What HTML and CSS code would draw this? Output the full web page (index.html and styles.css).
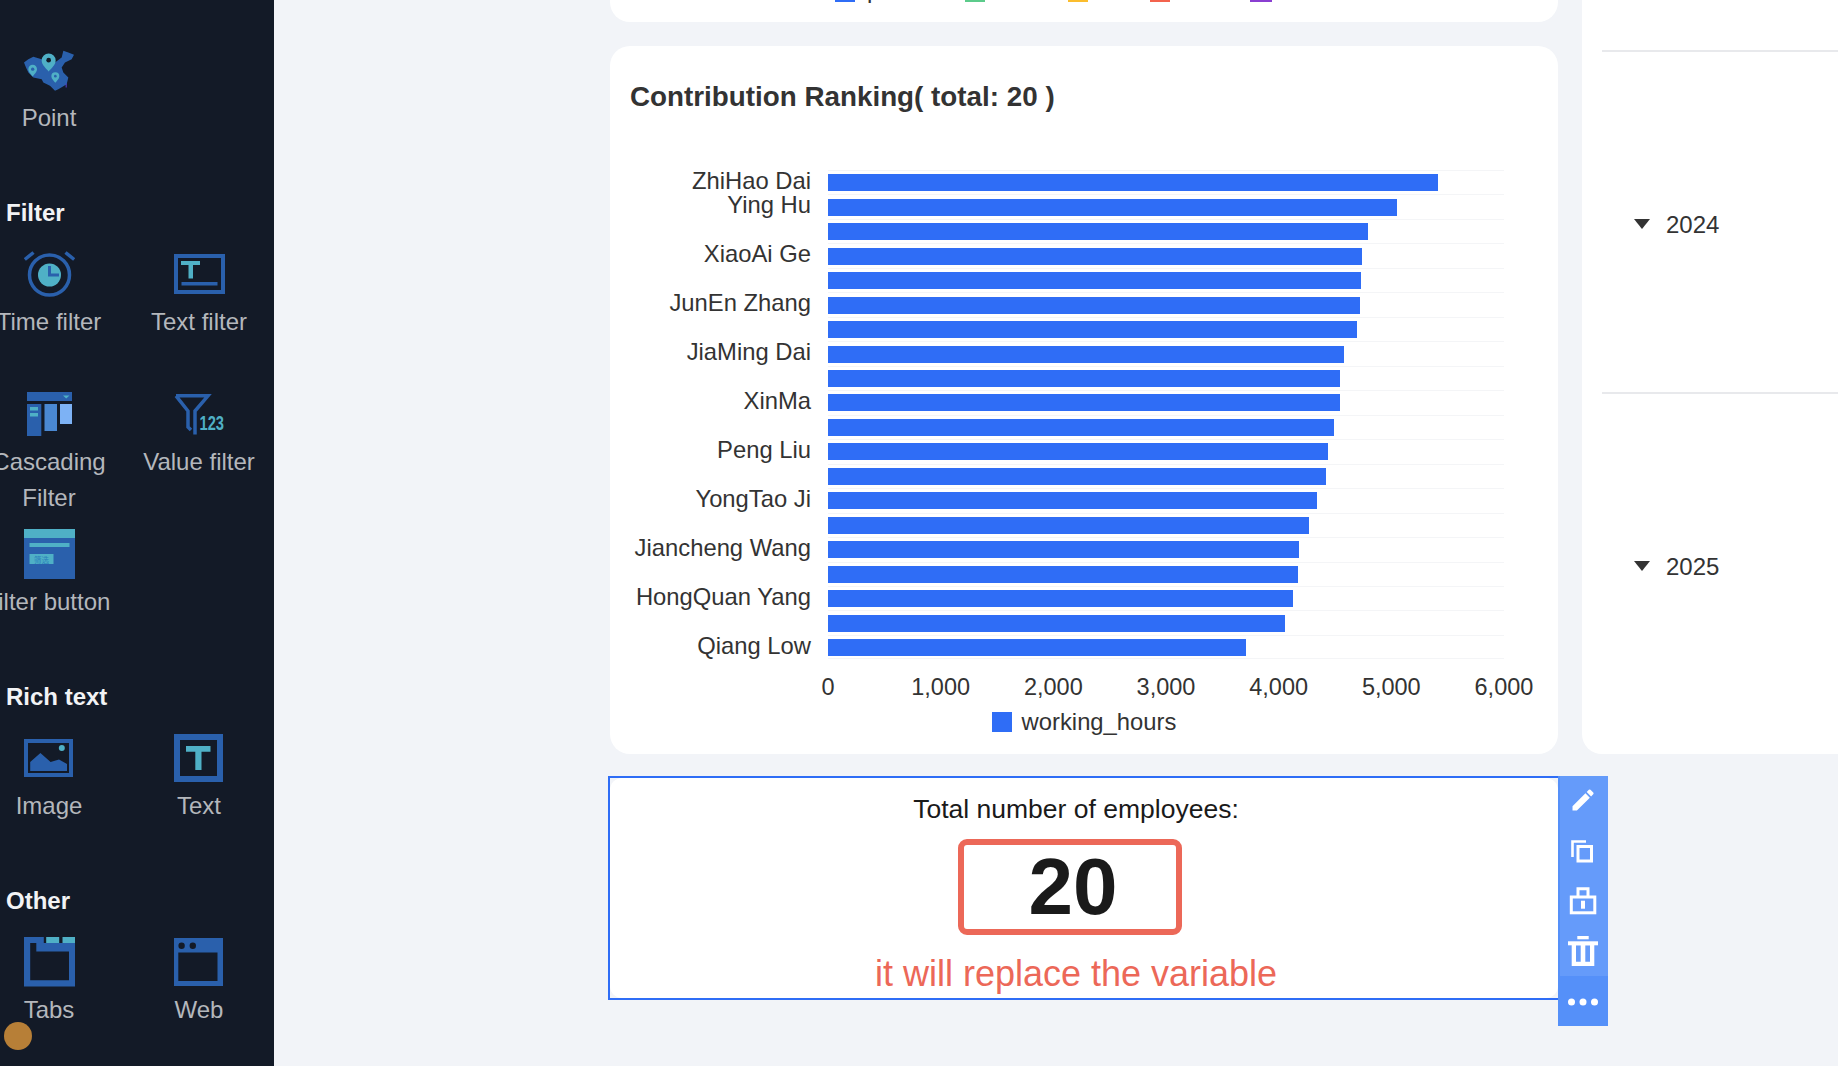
FILE: index.html
```html
<!DOCTYPE html>
<html lang="en">
<head>
<meta charset="utf-8">
<title>Dashboard editor</title>
<link rel="stylesheet" href="styles.css">
</head>
<body>
<div class="app">
  <aside class="sidebar">
    <div class="tile-grid">
      <div class="tile">
        <div class="tile-icon">
          <svg width="50" height="41" viewBox="0 0 150 122">
            <path class="i-blue" d="M0 37L13 27L28 20L53 27L93 37L113 22L118 2L133 7L150 14L143 27L123 37L113 52L118 67L133 82L128 102L103 117L93 122L78 107L58 97L53 87L28 82L13 67L6 52Z"/>
            <path class="i-teal" d="M74 10a21 21 0 0 1 21 21c0 14-14 24-21 33c-7-9-21-19-21-33a21 21 0 0 1 21-21z"/>
            <circle class="i-dark" cx="74" cy="30" r="7"/>
            <path class="i-teal" d="M26 44a13 13 0 0 1 13 13c0 9-9 15-13 22c-4-7-13-13-13-22a13 13 0 0 1 13-13z"/>
            <circle class="i-blue" cx="26" cy="57" r="5"/>
            <path class="i-teal" d="M94 66a12 12 0 0 1 12 12c0 8-8 14-12 20c-4-6-12-12-12-20a12 12 0 0 1 12-12z"/>
            <circle class="i-blue" cx="94" cy="78" r="4"/>
            <rect class="i-purple" x="125" y="100" width="3" height="12"/>
          </svg>
        </div>
        <div class="tile-label">Point</div>
      </div>
    </div>

    <h3 class="group-title">Filter</h3>
    <div class="tile-grid">
      <div class="tile">
        <div class="tile-icon">
          <svg width="51" height="46" viewBox="0 0 51 46">
            <circle class="s-blue" cx="25.5" cy="24" r="20" stroke-width="3.5"/>
            <circle class="i-teal" cx="25.5" cy="24" r="11.5"/>
            <path class="s-blue" stroke-width="3" d="M25.5 15V24H35"/>
            <path class="s-blue" stroke-width="3.5" d="M0.8 8.5L9.5 1.5M41.5 1.5L50.2 8.5"/>
          </svg>
        </div>
        <div class="tile-label">Time filter</div>
      </div>
      <div class="tile">
        <div class="tile-icon">
          <svg width="51" height="40" viewBox="0 0 51 40">
            <rect class="s-blue" x="2" y="2" width="47" height="36" stroke-width="4"/>
            <path class="i-teal" d="M7 7H26V11H19V24.500H14.500V11H7Z"/>
            <rect class="i-blue" x="7.500" y="28" width="36" height="3.500"/>
          </svg>
        </div>
        <div class="tile-label">Text filter</div>
      </div>
      <div class="tile">
        <div class="tile-icon">
          <svg width="45" height="44" viewBox="0 0 45 44">
            <rect class="i-blue" width="45" height="9"/>
            <path class="i-teal" d="M36 3.500H42.500L39.200 6.500Z"/>
            <rect class="i-blue" y="12" width="14.300" height="32"/>
            <rect class="i-teal" x="3" y="15" width="8" height="3.500"/>
            <rect class="i-teal" x="3" y="21" width="8" height="3.500"/>
            <rect class="i-mid" x="17.500" y="12" width="12.500" height="27"/>
            <rect class="i-light" x="33" y="12" width="12" height="20"/>
          </svg>
        </div>
        <div class="tile-label">Cascading Filter</div>
      </div>
      <div class="tile">
        <div class="tile-icon icon-left">
          <svg class="svg-open" width="51" height="41" viewBox="0 0 51 41">
            <path class="s-blue" stroke-width="3.500" d="M3 1.800H35L22 17V40.500M3 1.800L15 17V33L18 36"/>
            <text class="count-glyphs" x="26.500" y="35.500" textLength="24.500" lengthAdjust="spacingAndGlyphs">123</text>
          </svg>
        </div>
        <div class="tile-label">Value filter</div>
      </div>
      <div class="tile">
        <div class="tile-icon">
          <svg width="51" height="50" viewBox="0 0 51 50">
            <rect class="i-blue" width="51" height="50"/>
            <rect class="i-teal" width="51" height="9"/>
            <rect class="i-teal" x="5.500" y="14" width="40" height="4"/>
            <rect class="i-teal" x="5.500" y="25" width="24" height="10"/>
            <text class="mini-glyphs" x="10" y="33.500">筛选</text>
          </svg>
        </div>
        <div class="tile-label label-tight">Filter button</div>
      </div>
    </div>

    <h3 class="group-title">Rich text</h3>
    <div class="tile-grid">
      <div class="tile">
        <div class="tile-icon icon-left">
          <svg width="49" height="38" viewBox="0 0 49 38">
            <rect class="s-blue" x="2" y="2" width="45" height="34" stroke-width="4"/>
            <path class="i-blue" d="M6.200 32V23L16.400 14L26.600 23L35 20.400L43 25V32Z"/>
            <circle class="i-teal" cx="37.800" cy="9" r="3"/>
          </svg>
        </div>
        <div class="tile-label">Image</div>
      </div>
      <div class="tile">
        <div class="tile-icon icon-left">
          <svg width="49" height="48" viewBox="0 0 49 48">
            <rect class="s-blue" x="3" y="3" width="43" height="42" stroke-width="6"/>
            <path class="i-teal" d="M12 12H36.500V17.800H27.500V36H21.300V17.800H12Z"/>
          </svg>
        </div>
        <div class="tile-label">Text</div>
      </div>
    </div>

    <h3 class="group-title">Other</h3>
    <div class="tile-grid">
      <div class="tile">
        <div class="tile-icon">
          <svg width="51" height="50" viewBox="0 0 51 50">
            <path class="i-blue" fill-rule="evenodd" d="M0 0H19.800V6H51V49.500H0ZM6.200 6V43.200H45V14.600H12.300V6Z"/>
            <rect class="i-teal" x="22.200" width="13" height="6"/>
            <rect class="i-teal" x="38.500" width="12.500" height="6"/>
          </svg>
        </div>
        <div class="tile-label">Tabs</div>
      </div>
      <div class="tile">
        <div class="tile-icon icon-left">
          <svg width="49" height="48" viewBox="0 0 49 48">
            <path class="i-blue" fill-rule="evenodd" d="M0 0H49V48H0ZM4.300 14.600V43H43.500V14.600Z"/>
            <circle class="i-dark" cx="7.600" cy="7.700" r="3.200"/>
            <circle class="i-dark" cx="18.800" cy="7.700" r="3.200"/>
          </svg>
        </div>
        <div class="tile-label">Web</div>
      </div>
    </div>
    <span class="assist-dot"></span>
  </aside>

  <main class="canvas">
    <div class="col-main">
      <section class="card card-cut">
        <div class="cut-legend">
          <span class="cut-item"><i class="sw sw-blue"></i><b class="cut-text">p</b></span>
          <span class="cut-item"><i class="sw sw-green"></i></span>
          <span class="cut-item"><i class="sw sw-yellow"></i></span>
          <span class="cut-item"><i class="sw sw-red"></i></span>
          <span class="cut-item"><i class="sw sw-purple"></i></span>
        </div>
      </section>

      <section class="card card-chart">
        <h2 class="chart-title">Contribution Ranking( total: 20 )</h2>
        <div class="rows">
          <div class="row"><div class="name">ZhiHao Dai</div><div class="track"><div class="bar" style="width:90.3%"></div></div></div>
          <div class="row"><div class="name">Ying Hu</div><div class="track"><div class="bar" style="width:84.2%"></div></div></div>
          <div class="row"><div class="name"></div><div class="track"><div class="bar" style="width:79.9%"></div></div></div>
          <div class="row"><div class="name">XiaoAi Ge</div><div class="track"><div class="bar" style="width:79%"></div></div></div>
          <div class="row"><div class="name"></div><div class="track"><div class="bar" style="width:78.9%"></div></div></div>
          <div class="row"><div class="name">JunEn Zhang</div><div class="track"><div class="bar" style="width:78.7%"></div></div></div>
          <div class="row"><div class="name"></div><div class="track"><div class="bar" style="width:78.2%"></div></div></div>
          <div class="row"><div class="name">JiaMing Dai</div><div class="track"><div class="bar" style="width:76.4%"></div></div></div>
          <div class="row"><div class="name"></div><div class="track"><div class="bar" style="width:75.7%"></div></div></div>
          <div class="row"><div class="name">XinMa</div><div class="track"><div class="bar" style="width:75.7%"></div></div></div>
          <div class="row"><div class="name"></div><div class="track"><div class="bar" style="width:74.9%"></div></div></div>
          <div class="row"><div class="name">Peng Liu</div><div class="track"><div class="bar" style="width:74%"></div></div></div>
          <div class="row"><div class="name"></div><div class="track"><div class="bar" style="width:73.7%"></div></div></div>
          <div class="row"><div class="name">YongTao Ji</div><div class="track"><div class="bar" style="width:72.3%"></div></div></div>
          <div class="row"><div class="name"></div><div class="track"><div class="bar" style="width:71.1%"></div></div></div>
          <div class="row"><div class="name">Jiancheng Wang</div><div class="track"><div class="bar" style="width:69.7%"></div></div></div>
          <div class="row"><div class="name"></div><div class="track"><div class="bar" style="width:69.5%"></div></div></div>
          <div class="row"><div class="name">HongQuan Yang</div><div class="track"><div class="bar" style="width:68.8%"></div></div></div>
          <div class="row"><div class="name"></div><div class="track"><div class="bar" style="width:67.6%"></div></div></div>
          <div class="row"><div class="name">Qiang Low</div><div class="track"><div class="bar" style="width:61.9%"></div></div></div>
        </div>
        <div class="axis">
          <span class="tick">0</span><span class="tick">1,000</span><span class="tick">2,000</span><span class="tick">3,000</span><span class="tick">4,000</span><span class="tick">5,000</span><span class="tick">6,000</span>
        </div>
        <div class="legend"><i class="legend-swatch"></i><span>working_hours</span></div>
      </section>

      <section class="selected">
        <div class="kpi">
          <div class="kpi-title">Total number of employees:</div>
          <div class="kpi-box">20</div>
          <div class="kpi-note">it will replace the variable</div>
        </div>
        <div class="toolbar">
          <button class="tool">
            <svg width="50" height="50" viewBox="0 0 50 50">
              <path class="t-white" transform="translate(11 10) scale(1.17)" d="M3 17.250V21h3.750L17.810 9.940l-3.750-3.750L3 17.250zM20.710 7.040a1 1 0 0 0 0-1.410l-2.340-2.340a1 1 0 0 0-1.410 0l-1.830 1.830 3.750 3.750 1.830-1.830z"/>
            </svg>
          </button>
          <button class="tool">
            <svg width="50" height="50" viewBox="0 0 50 50">
              <path class="t-line" stroke-width="2.600" d="M14.500 31V15.500H28"/>
              <rect class="t-line" stroke-width="3" x="20" y="20.500" width="13.500" height="14.500"/>
            </svg>
          </button>
          <button class="tool">
            <svg width="50" height="50" viewBox="0 0 50 50">
              <rect class="t-line" stroke-width="3" x="13.300" y="21" width="23.500" height="15.800"/>
              <path class="t-line" stroke-width="3" d="M20 20V12.700H30V20"/>
              <rect class="t-white" x="23" y="24.700" width="4" height="8"/>
            </svg>
          </button>
          <button class="tool">
            <svg width="50" height="50" viewBox="0 0 50 50">
              <rect class="t-white" x="19.300" y="10" width="11.400" height="3.300"/>
              <rect class="t-white" x="10" y="15.300" width="30" height="4"/>
              <path class="t-white" fill-rule="evenodd" d="M13.700 19H36.300V40H13.700ZM18 19.300V35.700H22.700V19.300ZM27.300 19.300V35.700H32V19.300Z"/>
            </svg>
          </button>
          <button class="tool tool-more">
            <svg width="50" height="50" viewBox="0 0 50 50">
              <circle class="t-white" cx="13.500" cy="26" r="3.500"/>
              <circle class="t-white" cx="25" cy="26" r="3.500"/>
              <circle class="t-white" cx="36.500" cy="26" r="3.500"/>
            </svg>
          </button>
        </div>
      </section>
    </div>

    <section class="card-side">
      <div class="side-top"></div>
      <div class="year-row"><i class="caret"></i><span>2024</span></div>
      <div class="year-row year-last"><i class="caret"></i><span>2025</span></div>
    </section>
  </main>
</div>
</body>
</html>
```
FILE: styles.css
```css
* { box-sizing: border-box; }
html, body { margin: 0; height: 100%; overflow: hidden; }
body { font-family: "Liberation Sans", Arial, sans-serif; background: #f2f4f8; color: #333; }

.app { display: flex; height: 1066px; }

/* sidebar */
.sidebar { position: relative; flex: 0 0 274px; height: 1066px; overflow: hidden; background: #131a27; padding-top: 40px; }
.tile-grid { display: grid; grid-template-columns: 150px 150px; grid-auto-rows: 140px; margin-left: -26px; }
.tile { text-align: center; }
.tile-icon { height: 60px; display: flex; align-items: center; justify-content: center; }
.icon-left { padding-right: 2px; }
.svg-open { overflow: visible; }
.tile-label { font-size: 24px; line-height: 36px; color: #b4b7bc; }
.label-tight { padding-right: 4px; }
.group-title { margin: 15px 0 13px 6px; font-size: 24px; line-height: 36px; font-weight: 700; color: #f2f3f5; }
.assist-dot { position: absolute; left: 4px; top: 1022px; width: 28px; height: 28px; border-radius: 50%; background: #b77f37; }

.i-blue { fill: #2a60ac; }
.i-teal { fill: #4fb0c6; }
.i-mid { fill: #4a88d2; }
.i-light { fill: #7db2f5; }
.i-dark { fill: #131a27; }
.i-purple { fill: #5a3fd0; }
.s-blue { fill: none; stroke: #2a60ac; }
.count-glyphs { font-family: "Liberation Sans", sans-serif; font-size: 20px; font-weight: 700; fill: #4fb0c6; }
.mini-glyphs { font-family: "Noto Sans CJK SC", sans-serif; font-size: 7.500px; fill: #2a7dbb; }

/* canvas */
.canvas { flex: 1; display: flex; gap: 24px; padding-left: 336px; overflow: hidden; }
.col-main { flex: 0 0 948px; display: flex; flex-direction: column; }

.card { background: #fff; border-radius: 20px; }
.card-cut { height: 22px; border-radius: 0 0 20px 20px; overflow: hidden; margin-bottom: 24px; }
.cut-legend { display: grid; grid-template-columns: 130px 103px 82px 100px 22px; padding-left: 225px; margin-top: -22px; }
.cut-item { display: flex; align-items: flex-start; gap: 12px; height: 24px; }
.sw { display: block; width: 20px; height: 24px; }
.sw-blue { background: #2f6df6; }
.sw-green { background: #5ccb8b; }
.sw-yellow { background: #fbbd2e; }
.sw-red { background: #f3634e; }
.sw-purple { background: #8a3fd1; width: 22px; }
.cut-text { font-weight: 400; font-size: 24px; line-height: 24px; color: #333; }

.card-chart { height: 708px; padding: 33px 20px 0; }
.chart-title { margin: 0 0 55px; font-size: 27.800px; line-height: 36px; font-weight: 700; color: #333; white-space: nowrap; }
.rows { display: flex; flex-direction: column; }
.row { display: grid; grid-template-columns: 181px 676px; column-gap: 17px; height: 24.470px; }
.name { font-size: 23.800px; line-height: 22px; height: 22px; text-align: right; white-space: nowrap; color: #333; }
.track { display: flex; align-items: center; border-top: 1px solid #f4f5f7; }
.row:last-child .track { border-bottom: 1px solid #f4f5f7; }
.bar { height: 17px; background: #2f6df6; }
.axis { display: flex; justify-content: space-between; width: 676px; margin: 14px 0 0 198px; font-size: 23.500px; line-height: 28px; color: #333; }
.tick { width: 0; display: flex; justify-content: center; white-space: nowrap; }
.legend { display: flex; align-items: center; justify-content: center; gap: 10px; margin-top: 7px; font-size: 23.800px; line-height: 28px; color: #333; }
.legend-swatch { display: block; width: 20px; height: 20px; background: #2f6df6; }

/* selected widget */
.selected { position: relative; height: 224px; margin: 22px 0 0 -2px; border: 2px solid #2f6df6; border-right: 0; background: #f2f4f8; }
.kpi { height: 100%; background: #fff; border-radius: 12px; display: flex; flex-direction: column; align-items: center; padding: 13px 16px 0 0; }
.kpi-title { font-size: 26.500px; line-height: 36px; color: #1a1a1a; white-space: nowrap; }
.kpi-box { width: 224px; height: 96px; margin: 12px 12px 0 0; border: 6px solid #ec6858; border-radius: 9px; display: flex; align-items: center; justify-content: center; padding-left: 6px; font-size: 80px; font-weight: 700; line-height: 1; color: #1a1a1a; }
.kpi-note { margin-top: 15px; font-size: 36px; line-height: 48px; color: #ec6858; white-space: nowrap; }

.toolbar { position: absolute; left: 100%; top: -2px; width: 50px; height: 250px; display: flex; flex-direction: column; background: #659bfa; border-left: 2px solid #5590f9; }
.tool { flex: 0 0 50px; width: 50px; margin-left: -2px; padding: 0; border: 0; background: none; display: block; }
.tool svg { display: block; }
.tool-more { background: #5590f9; }
.t-white { fill: #fff; }
.t-line { fill: none; stroke: #fff; }

/* side card */
.card-side { flex: 0 0 256px; height: 754px; background: #fff; border-radius: 0 0 0 20px; padding-left: 20px; }
.side-top { height: 52px; border-bottom: 2px solid #e8e9ec; }
.year-row { height: 342px; padding: 156px 0 0 32px; display: flex; align-items: flex-start; gap: 16px; font-size: 24px; line-height: 34px; color: #333; border-bottom: 2px solid #e8e9ec; }
.year-last { border-bottom: 0; padding-top: 156px; }
.caret { display: block; width: 0; height: 0; margin-top: 11px; border-left: 8px solid transparent; border-right: 8px solid transparent; border-top: 10px solid #333; }
```
